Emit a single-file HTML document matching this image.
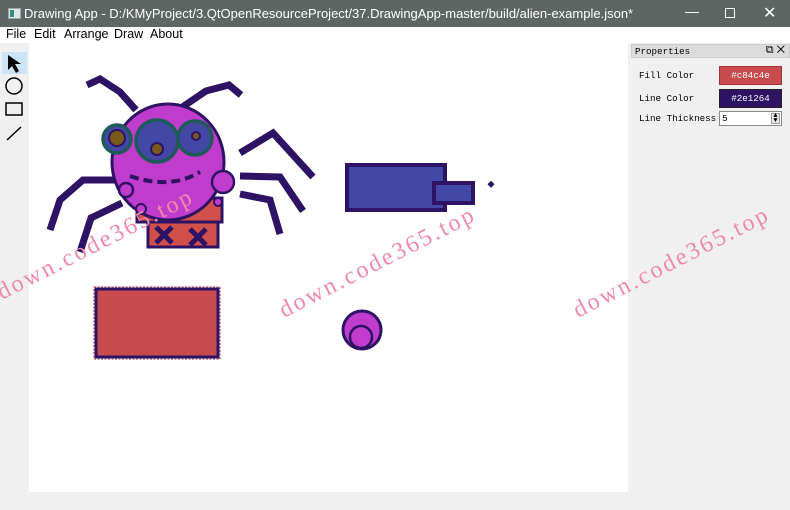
<!DOCTYPE html>
<html><head><meta charset="utf-8"><style>
*{margin:0;padding:0;box-sizing:border-box}
body{width:790px;height:510px;overflow:hidden;background:#f0f0f0;font-family:"Liberation Sans",sans-serif;position:relative}
.title{position:absolute;left:0;top:0;width:790px;height:27px;background:#5d6662;color:#fff;font-size:13px}
.menu{position:absolute;left:0;top:27px;width:790px;height:16px;background:#fff;font-size:12.5px}
.menu span{position:absolute;top:0}
.mono{font-family:"Liberation Mono",monospace;font-size:9.2px}
</style></head><body>
<div class="title">
<div style="position:absolute;left:8px;top:8px;width:13px;height:11px;background:#dfe6e6;border:1px solid #9aa"></div>
<div style="position:absolute;left:10px;top:10px;width:4px;height:7px;background:#3d8a86"></div>
<span style="position:absolute;left:24px;top:6px">Drawing App - D:/KMyProject/3.QtOpenResourceProject/37.DrawingApp-master/build/alien-example.json*</span>
<span style="position:absolute;left:685px;top:3px;font-size:14px">—</span>
<div style="position:absolute;left:725px;top:8px;width:10px;height:10px;border:1px solid #fff"></div>
<span style="position:absolute;left:763px;top:3px;font-size:16px">✕</span>
</div>
<div class="menu"><span style="left:6px">File</span><span style="left:34px">Edit</span><span style="left:64px">Arrange</span><span style="left:114px">Draw</span><span style="left:150px">About</span></div>
<div style="position:absolute;left:0;top:43px;width:28px;height:467px;background:#f0f0f0"></div>
<div style="position:absolute;left:2px;top:52px;width:25px;height:22px;background:#cce4f7"></div>
<svg style="position:absolute;left:0;top:43px" width="30" height="110">
<path d="M8 12 L8 27 L12 23 L16 30 L19 28 L15 21 L21 21 Z" fill="#000"/>
<circle cx="14" cy="43" r="8" fill="none" stroke="#000" stroke-width="1.5"/>
<rect x="6" y="60" width="16" height="12" fill="none" stroke="#000" stroke-width="1.5"/>
<line x1="7" y1="97" x2="21" y2="84" stroke="#000" stroke-width="1.5"/>
</svg>
<div style="position:absolute;left:29px;top:43px;width:599px;height:449px;background:#fff"></div>
<svg style="position:absolute;left:0;top:0" width="628" height="492">
<g fill="none" stroke="#2e1264" stroke-width="7" stroke-linejoin="miter">
<polyline points="87,85 100,79 120,92 136,110"/>
<polyline points="178,110 206,91 229,85 241,95"/>
<polyline points="50,230 60,200 83,180 122,180"/>
<polyline points="80,252 91,218 122,203"/>
<polyline points="240,153 273,133 313,177"/>
<polyline points="240,176 280,177 303,211"/>
<polyline points="240,194 270,200 280,234"/>
</g>
<rect x="148" y="220" width="70" height="27" fill="#d2504a" stroke="#2e1264" stroke-width="3"/>
<rect x="137" y="198" width="85" height="24" fill="#d2504a" stroke="#2e1264" stroke-width="3"/>
<ellipse cx="168" cy="162" rx="56" ry="58" fill="#c03ccc" stroke="#2e1264" stroke-width="3"/>
<circle cx="141" cy="209" r="5" fill="#c03ccc" stroke="#2e1264" stroke-width="2"/>
<circle cx="218" cy="202" r="4" fill="#c03ccc" stroke="#2e1264" stroke-width="2"/>
<circle cx="126" cy="190" r="7" fill="#c03ccc" stroke="#2e1264" stroke-width="2.5"/>
<circle cx="223" cy="182" r="11" fill="#c03ccc" stroke="#2e1264" stroke-width="2.5"/>
<path d="M130 176 Q170 190 200 172" fill="none" stroke="#2e1264" stroke-width="4" stroke-dasharray="9,5"/>
<circle cx="117" cy="139" r="14" fill="#4347a5" stroke="#1f5a5a" stroke-width="3.5"/>
<circle cx="157" cy="141" r="21" fill="#4347a5" stroke="#1f5a5a" stroke-width="3.5"/>
<circle cx="195" cy="138" r="17" fill="#4347a5" stroke="#1f5a5a" stroke-width="3.5"/>
<circle cx="117" cy="138" r="8" fill="#7a5a1a" stroke="#2e1264" stroke-width="2"/>
<circle cx="157" cy="149" r="6" fill="#7a5a1a" stroke="#2e1264" stroke-width="2"/>
<circle cx="196" cy="136" r="4" fill="#7a5a1a" stroke="#2e1264" stroke-width="2"/>
<g stroke="#2e1264" stroke-width="5">
<line x1="156" y1="227" x2="172" y2="243"/><line x1="172" y1="227" x2="156" y2="243"/>
<line x1="190" y1="229" x2="206" y2="245"/><line x1="206" y1="229" x2="190" y2="245"/>
</g>
<rect x="347" y="165" width="98" height="45" fill="#4347a5" stroke="#2e1264" stroke-width="4"/>
<rect x="434" y="183" width="39" height="20" fill="#4347a5" stroke="#2e1264" stroke-width="4"/>
<rect x="488" y="182" width="5" height="5" fill="#2e1264" transform="rotate(45 491 185)"/>
<rect x="94" y="287" width="126" height="72" fill="none" stroke="#c8707a" stroke-width="1.5" stroke-dasharray="2,1.5"/>
<rect x="96" y="289" width="122" height="68" fill="#c84c4e" stroke="#2e1264" stroke-width="3"/>
<circle cx="362" cy="330" r="19" fill="#c03ccc" stroke="#2e1264" stroke-width="3"/>
<circle cx="361" cy="337" r="11" fill="#c03ccc" stroke="#2e1264" stroke-width="2.5"/>
<g fill="#f08aa8" font-family="Liberation Serif,serif" font-size="24" letter-spacing="2.5">
<text x="0" y="0" transform="translate(2,300) rotate(-27)">down.code365.top</text>
<text x="0" y="0" transform="translate(284,318) rotate(-27)">down.code365.top</text>
</g>
</svg>
<svg style="position:absolute;left:0;top:0" width="790" height="510"><text fill="#f08aa8" font-family="Liberation Serif,serif" font-size="24" letter-spacing="2.5" transform="translate(578,318) rotate(-27)">down.code365.top</text></svg>
<div style="position:absolute;left:631px;top:44px;width:159px;height:14px;background:#dcdcdc;border:1px solid #ccc" class="mono"><span style="position:absolute;left:3px;top:1px">Properties</span><span style="position:absolute;right:4px;top:-1px;font-family:'Liberation Sans';font-size:11px">⧉ ✕</span></div>
<div class="mono" style="position:absolute;left:639px;top:70px">Fill Color</div>
<div class="mono" style="position:absolute;left:639px;top:93px">Line Color</div>
<div class="mono" style="position:absolute;left:639px;top:113px">Line Thickness</div>
<div class="mono" style="position:absolute;left:719px;top:66px;width:63px;height:19px;background:#c84c4e;border:1px solid #a33;color:#fff;text-align:center;line-height:17px">#c84c4e</div>
<div class="mono" style="position:absolute;left:719px;top:89px;width:63px;height:19px;background:#2e1264;border:1px solid #222;color:#fff;text-align:center;line-height:17px">#2e1264</div>
<div class="mono" style="position:absolute;left:719px;top:111px;width:63px;height:15px;background:#fff;border:1px solid #888;line-height:13px;padding-left:2px">5<span style="position:absolute;right:1px;top:1px;width:9px;height:11px;background:#e8e8e8;border:1px solid #999;font-size:7px;line-height:5px;text-align:center">▲<br>▼</span></div>
</body></html>
